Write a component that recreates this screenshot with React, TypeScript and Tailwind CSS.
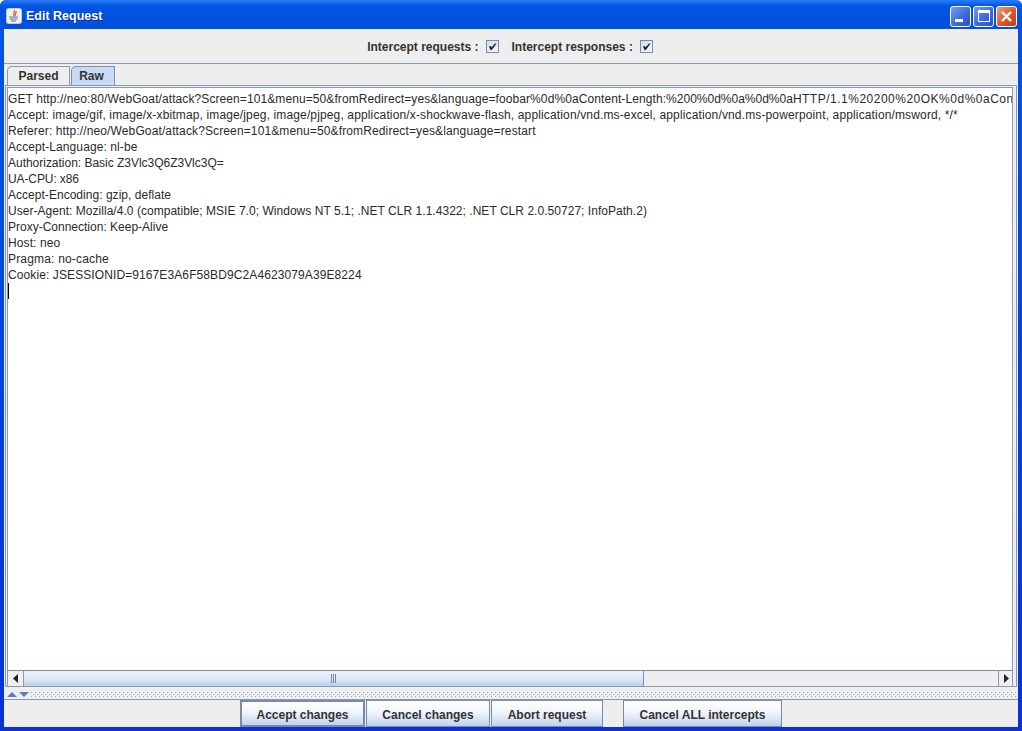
const LINES: [string, string][] = [
  ["Accept: image/gif, image/x-xbitmap, image/jpeg, image/pjpeg, application/x-shockwave-flash, application/vnd.ms-excel, application/vnd.ms-powerpoint, application/msword, */*", "tracking-[0.14px]"],
  ["Referer: http://neo/WebGoat/attack?Screen=101&menu=50&fromRedirect=yes&language=restart", "tracking-[0.125px]"],
  ["Accept-Language: nl-be", "tracking-[0.09px]"],
  ["Authorization: Basic Z3Vlc3Q6Z3Vlc3Q=", "tracking-[-0.02px]"],
  ["UA-CPU: x86", "tracking-[-0.1px]"],
  ["Accept-Encoding: gzip, deflate", "tracking-[0.03px]"],
  ["User-Agent: Mozilla/4.0 (compatible; MSIE 7.0; Windows NT 5.1; .NET CLR 1.1.4322; .NET CLR 2.0.50727; InfoPath.2)", "tracking-[0.035px]"],
  ["Proxy-Connection: Keep-Alive", "tracking-normal"],
  ["Host: neo", "tracking-[0.1px]"],
  ["Pragma: no-cache", "tracking-[0.18px]"],
  ["Cookie: JSESSIONID=9167E3A6F58BD9C2A4623079A39E8224", "tracking-[0.1px]"],
];

function Check() {
  return (
    <span className="flex h-[13px] w-[13px] items-center justify-center border border-[#7a8aa5] bg-gradient-to-br from-[#cfdef3] to-[#f4f7fc]">
      <svg width="9" height="9" viewBox="0 0 9 9">
        <path d="M1 4.5 L2.8 4 L3.5 5.5 L7 1.5 L8.5 1.5 L3.8 8 L2.6 8 Z" fill="#1a1a1a" />
      </svg>
    </span>
  );
}

function Btn({ label, w, strong }: { label: string; w: string; strong?: boolean }) {
  return (
    <button
      className={`flex h-[27px] items-center justify-center bg-gradient-to-b from-white via-[#eef3fb] to-[#bfd2ea] pt-[2px] text-[12px] font-bold text-[#333333] ${w} ${strong ? "border-2 border-[#7a8aa5]" : "border border-[#7a8aa5]"}`}
    >
      {label}
    </button>
  );
}

function CapBtn({ children, red }: { children: React.ReactNode; red?: boolean }) {
  return (
    <div
      className={`flex h-[21px] w-[21px] items-center justify-center rounded-[3px] border border-white ${
        red ? "bg-gradient-to-br from-[#eb9f86] via-[#dc5a32] to-[#bd3a13]" : "bg-gradient-to-br from-[#7d9cf0] via-[#3f6fe0] to-[#2a50c8]"
      }`}
    >
      {children}
    </div>
  );
}

export default function App() {
  return (
    <div className="flex h-[731px] w-[1022px] flex-col overflow-hidden rounded-t-[6px] bg-gradient-to-b from-[#0055e5] to-[#0831d9] font-['Liberation_Sans',sans-serif]">
      {/* title bar */}
      <div className="flex h-[29px] shrink-0 items-center bg-gradient-to-b from-[#2a7cf5] via-[#0054e3] via-20% to-[#0350de] pl-[6px] pr-[5px] pt-[3px]">
        <svg width="16" height="16" viewBox="0 0 16 16" className="shrink-0">
          <rect x="0.5" y="0.5" width="15" height="15" rx="2" fill="#f2f2ee" stroke="#c6ccd8" />
          <path d="M8 2 C10 4 6 5 8 8 M10 3 C11 5 8 6 9.5 8" stroke="#e0602a" strokeWidth="1.3" fill="none" />
          <path d="M3 9 H12 M3.5 11 H11.5 M5 13 H10" stroke="#4f73ad" strokeWidth="1.2" />
        </svg>
        <span className="ml-[4px] text-[12.5px] font-bold text-white [text-shadow:1px_1px_0_#0a2a8a]">Edit Request</span>
        <div className="ml-auto flex gap-[2px]">
          <CapBtn>
            <span className="mt-[9px] mr-[4px] h-[3px] w-[8px] bg-white" />
          </CapBtn>
          <CapBtn>
            <span className="h-[12px] w-[12px] border border-t-[3px] border-white" />
          </CapBtn>
          <CapBtn red>
            <svg width="13" height="13" viewBox="0 0 13 13">
              <path d="M2 2 L11 11 M11 2 L2 11" stroke="white" strokeWidth="2.4" />
            </svg>
          </CapBtn>
        </div>
      </div>

      {/* client */}
      <div className="mx-[4px] mb-[4px] flex min-h-0 flex-1 flex-col bg-[#eeeeee]">
        <div className="flex h-[35px] shrink-0 items-center justify-center gap-[13px] border-b border-[#8a99b0] pt-[1px] pr-[2px] text-[12px] font-bold text-[#333333]">
          <div className="flex items-center gap-[7px]">
            <span>Intercept requests :</span>
            <Check />
          </div>
          <div className="flex items-center gap-[7px]">
            <span>Intercept responses :</span>
            <Check />
          </div>
        </div>

        {/* tabs */}
        <div className="flex h-[21px] shrink-0 items-end gap-px pl-[3px] pt-[2px]">
          <div className="flex h-[19px] w-[63px] items-center justify-center rounded-tl-[5px] border border-b-0 border-[#8a99b0] bg-[#eeeeee] text-[12px] font-bold text-[#333333]">
            Parsed
          </div>
          <div className="flex h-[19px] w-[44px] items-center justify-center rounded-tl-[5px] border border-b-0 border-[#7a8fb5] bg-[#c9daf3] pr-[3px] text-[12px] font-bold text-[#333333]">
            Raw
          </div>
        </div>

        {/* editor */}
        <div className="mx-[1px] flex min-h-0 flex-1 flex-col border border-[#8a99b0] bg-[#eeeeee] pt-px pl-px pr-[3px]">
          <div className="flex min-h-0 flex-1 flex-col border-l border-t border-r border-[#8a99b0] bg-white">
            <div className="min-h-0 flex-1 overflow-hidden whitespace-pre pt-[3px] text-[12px] leading-[16px] text-[#2a2a2a]">
              <div className="h-[16px]">
                <span className="tracking-[0.09px]">GET http://neo:80/WebGoat/attack?Screen=101&amp;menu=50&amp;fromRedirect=yes&amp;language=foobar%0d%0aContent-Length:</span>
                <span>%200%0d%0a%0d%0a</span>
                <span className="tracking-[0.5px]">HTTP/1.1%20200%20OK%0d%0aContent-Type:%20text/html%0d%0aContent-Length:%2047%0d%0a</span>
              </div>
              {LINES.map(([l, t]) => (
                <div key={l} className={`h-[16px] ${t}`}>
                  {l}
                </div>
              ))}
              <div className="h-[16px] w-px bg-black" />
            </div>
            {/* scrollbar */}
            <div className="flex h-[16px] shrink-0 border-t border-[#7a8aa5] bg-[#eeeeee]">
              <div className="flex w-[16px] shrink-0 items-center justify-center border-r border-[#8a99b0] bg-[#f0f0f0]">
                <svg width="6" height="9" viewBox="0 0 6 9"><path d="M5 0 V9 L0 4.5 Z" fill="#222" /></svg>
              </div>
              <div className="flex w-[620px] items-center justify-center border-r border-[#6d8fd0] bg-gradient-to-b from-[#eaf2fb] via-[#dfe9f7] to-[#b9cfe9]">
                <div className="flex h-[9px] gap-px">
                  <span className="w-px bg-[#6d85b5]" />
                  <span className="w-px bg-[#6d85b5]" />
                  <span className="w-px bg-[#6d85b5]" />
                </div>
              </div>
              <div className="flex-1" />
              <div className="flex w-[14px] shrink-0 items-center justify-center border-l border-[#8a99b0] bg-[#f0f0f0]">
                <svg width="6" height="9" viewBox="0 0 6 9"><path d="M1 0 V9 L6 4.5 Z" fill="#222" /></svg>
              </div>
            </div>
          </div>
        </div>

        {/* divider */}
        <div className="flex h-[12px] shrink-0 items-center gap-[2px] pl-[3px] pr-[2px] pt-[2px]">
          <svg width="10" height="5" viewBox="0 0 10 5" className="shrink-0"><path d="M5 0 L10 5 H0 Z" fill="#5a7fb8" /></svg>
          <svg width="10" height="5" viewBox="0 0 10 5" className="shrink-0"><path d="M0 0 H10 L5 5 Z" fill="#5a7fb8" /></svg>
          <svg height="5" className="min-w-0 flex-1">
            <defs>
              <pattern id="grip" width="4" height="4" patternUnits="userSpaceOnUse">
                <rect x="0" y="0" width="1" height="1" fill="#9aacc8" />
                <rect x="2" y="2" width="1" height="1" fill="#9aacc8" />
                <rect x="1" y="1" width="1" height="1" fill="#ffffff" />
                <rect x="3" y="3" width="1" height="1" fill="#ffffff" />
              </pattern>
            </defs>
            <rect width="100%" height="5" fill="url(#grip)" />
          </svg>
        </div>

        {/* buttons */}
        <div className="flex h-[28px] shrink-0 items-end justify-center border-t border-[#8a99b0]">
          <Btn label="Accept changes" w="w-[125px]" strong />
          <div className="w-px" />
          <Btn label="Cancel changes" w="w-[124px]" />
          <div className="w-px" />
          <Btn label="Abort request" w="w-[112px]" />
          <div className="w-[20px]" />
          <Btn label="Cancel ALL intercepts" w="w-[159px]" />
        </div>
      </div>
    </div>
  );
}
